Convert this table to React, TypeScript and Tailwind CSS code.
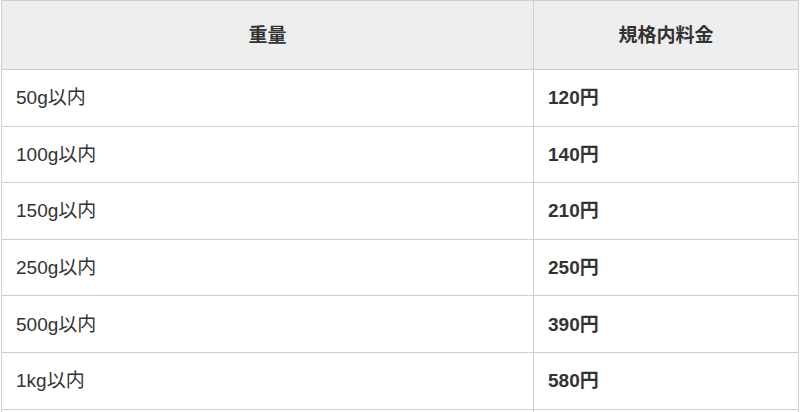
const rows = [
  { weight: '50g以内', price: '120円' },
  { weight: '100g以内', price: '140円' },
  { weight: '150g以内', price: '210円' },
  { weight: '250g以内', price: '250円' },
  { weight: '500g以内', price: '390円' },
  { weight: '1kg以内', price: '580円' },
  { weight: '', price: '' },
];

export default function App() {
  return (
    <div
      className="h-[412px] overflow-hidden bg-white px-[1px] text-[19px] leading-none text-[#333]"
      style={{ fontFamily: '"Liberation Sans", "Noto Sans CJK JP", sans-serif' }}
    >
      <table className="w-full border-collapse">
        <thead>
          <tr className="h-[69px] bg-[#eeeeee]">
            <th className="w-[532px] border border-[#cfcfcf] font-bold">重量</th>
            <th className="border border-[#cfcfcf] font-bold">規格内料金</th>
          </tr>
        </thead>
        <tbody>
          {rows.map((r, i) => (
            <tr key={i} className="h-[56.6px]">
              <td className="border border-[#cfcfcf] pl-[14px]">{r.weight}</td>
              <td className="border border-[#cfcfcf] pl-[14px] font-bold">{r.price}</td>
            </tr>
          ))}
        </tbody>
      </table>
    </div>
  );
}
